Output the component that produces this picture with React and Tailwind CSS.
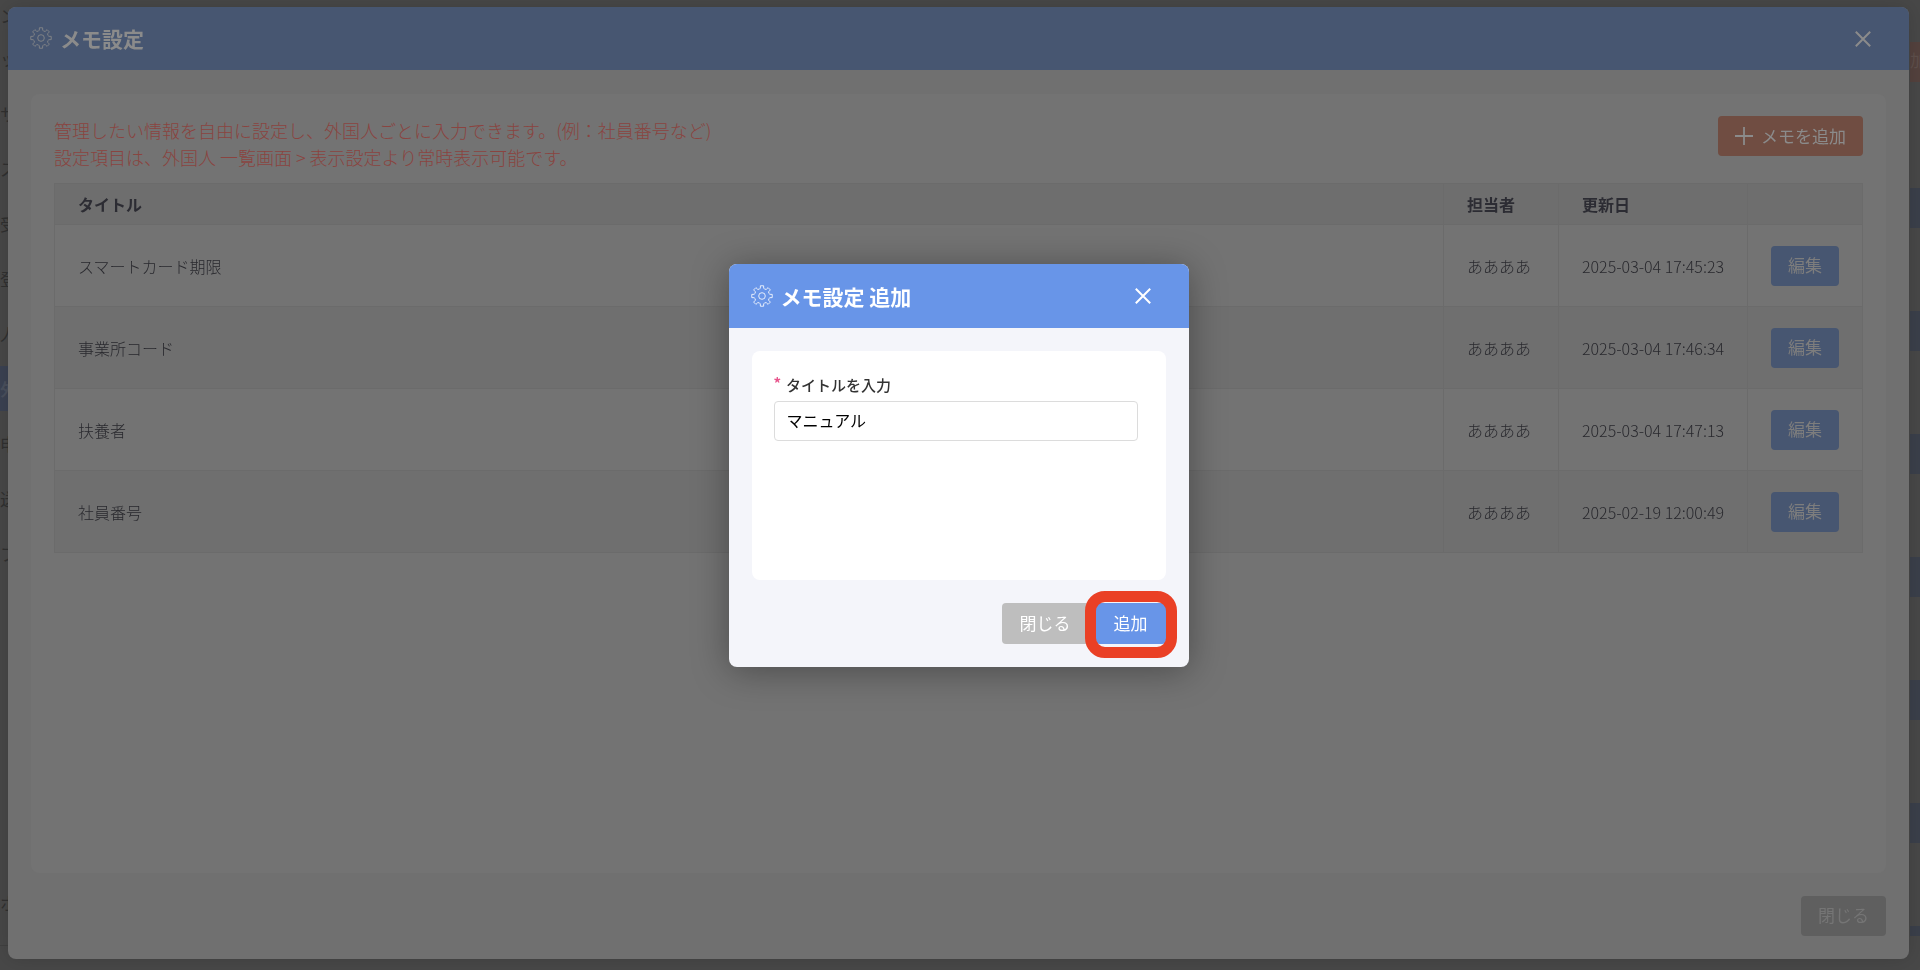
import React, { useState } from "react";

const memos = [
    { id: 1, title: "スマートカード期限", staff: "ああああ", updatedAt: "2025-03-04 17:45:23" },
    { id: 2, title: "事業所コード", staff: "ああああ", updatedAt: "2025-03-04 17:46:34" },
    { id: 3, title: "扶養者", staff: "ああああ", updatedAt: "2025-03-04 17:47:13" },
    { id: 4, title: "社員番号", staff: "ああああ", updatedAt: "2025-02-19 12:00:49" },
];

const menuItems = ["ッ", "サ", "ス", "受", "登", "人", "外", "申", "送", "フ"];


// gear outline with eight teeth
const gearPath = () => {
    const at = (r, deg) => {
        const a = ((deg - 90) * Math.PI) / 180;
        return `${(12 + r * Math.cos(a)).toFixed(2)} ${(12 + r * Math.sin(a)).toFixed(2)}`;
    };
    let d = "";
    for (let i = 0; i < 8; i++) {
        const c = i * 45;
        d += `${i === 0 ? "M" : "L"}${at(8.8, c - 12)} L${at(11.3, c - 9)} L${at(11.3, c + 9)} L${at(8.8, c + 12)} Q${at(7.2, c + 22.5)} ${at(8.8, c + 33)} `;
    }
    return d + "Z";
};

const GearIcon = () => (
    <svg viewBox="0 0 24 24" className="size-[22px]" fill="none" stroke="currentColor" strokeWidth="0.9" strokeLinejoin="round">
        <path d={gearPath()} />
        <circle cx="12" cy="12" r="3.6" />
    </svg>
);

const CloseIcon = () => (
    <svg viewBox="0 0 16 16" className="size-4" fill="none" stroke="currentColor" strokeWidth="2">
        <path d="M0.8 0.8 15.2 15.2M15.2 0.8 0.8 15.2" />
    </svg>
);

const PlusIcon = () => (
    <svg viewBox="0 0 18 18" className="size-[18px]" fill="none" stroke="currentColor" strokeWidth="1.8">
        <path d="M9 0V18M0 9H18" />
    </svg>
);


const Background = () => (
    <div className="h-screen flex justify-between overflow-hidden bg-[#484848] text-[#303030] text-[17px]">
        <nav className="w-60 flex flex-col">
            <span className="h-[31px] flex items-center">ン</span>
            {menuItems.map(item => (
                <a
                    href="#"
                    key={item}
                    className={item === "外" ? "h-[55px] flex items-center bg-[#3b4252] text-[#4a505d] font-bold bg-clip-content py-[5px]" : "h-[55px] flex items-center"}
                >
                    {item}
                </a>
            ))}
            <span className="mt-auto mb-6 h-[86px] flex items-center border-b border-[#404040]">ホ</span>
        </nav>
        <div className="w-[10px] flex flex-col pt-[42px]">
            <div className="h-10 mb-[106px] bg-[#54423e] text-[#5f504c] leading-9 overflow-hidden">加</div>
            <div className="flex flex-col gap-[83px]">
                {[1, 2, 3, 4, 5, 6].map(n => (
                    <div key={n} className="h-10 bg-[#3b404b]" />
                ))}
                <div className="h-[10px] bg-[#3b404b]" />
            </div>
        </div>
    </div>
);


const MemoList = () => (
    <div className="fixed inset-0 flex pt-[7px] pr-[11px] pb-[11px] pl-2">
        <section className="flex-1 flex flex-col rounded-lg bg-[#707070] overflow-hidden shadow-[0_0_20px_rgba(0,0,0,0.15)]">
            <header className="h-[63px] px-[22px] flex items-center justify-between bg-[#475671] text-[#8b8b8b]">
                <h1 className="flex items-center gap-2 pb-px text-[21px] leading-8 font-bold">
                    <GearIcon />
                    メモ設定
                </h1>
                <button type="button" aria-label="閉じる" className="mr-4">
                    <CloseIcon />
                </button>
            </header>

            <div className="flex-1 flex flex-col p-[23px] pt-6">
                <div className="flex-1 rounded-lg bg-[#737373] p-[23px] pt-[22px]">
                    <div className="flex items-start justify-between pb-[13px]">
                        <p className="pt-px -mb-px text-[18px] leading-[27px] font-light text-[#8a4440]">
                            管理したい情報を自由に設定し、外国人ごとに入力できます。(例：社員番号など)<br />
                            設定項目は、外国人 一覧画面 &gt; 表示設定より常時表示可能です。
                        </p>
                        <button type="button" className="h-10 px-[17px] flex items-center gap-2 rounded bg-[#704d42] text-[#8b8b8b] text-[17px]">
                            <PlusIcon />
                            <span className="pb-px">メモを追加</span>
                        </button>
                    </div>

                    <table className="w-full table-fixed border-collapse border border-[#6b6b6b] text-left text-[#29292e]">
                        <thead>
                            <tr className="h-[41px] bg-[#6e6e6e] text-[#2c2c33]">
                                <th className="border border-[#6b6b6b] px-[23px]">タイトル</th>
                                <th className="w-[115px] border border-[#6b6b6b] px-[23px]">担当者</th>
                                <th className="w-[189px] border border-[#6b6b6b] px-[23px]">更新日</th>
                                <th className="w-[115px] border border-[#6b6b6b]"></th>
                            </tr>
                        </thead>
                        <tbody>
                            {memos.map(memo => (
                                <tr key={memo.id} className="h-[82px] even:bg-[#6f6f6f] font-light">
                                    <td className="border border-[#6b6b6b] px-[23px]">{memo.title}</td>
                                    <td className="border border-[#6b6b6b] px-[23px] whitespace-nowrap">{memo.staff}</td>
                                    <td className="border border-[#6b6b6b] px-[23px] whitespace-nowrap">{memo.updatedAt}</td>
                                    <td className="border border-[#6b6b6b] text-center">
                                        <button type="button" className="h-10 px-[17px] pb-0.5 rounded bg-[#475671] text-[#7d7d7d] text-[17px] font-normal">編集</button>
                                    </td>
                                </tr>
                            ))}
                        </tbody>
                    </table>
                </div>
                <div className="flex justify-end pt-[23px]">
                    <button type="button" className="h-10 px-[17px] pb-0.5 rounded bg-[#5f5f5f] text-[#757575] text-[17px]">閉じる</button>
                </div>
            </div>
        </section>
    </div>
);


const AddMemo = () => {
    const [title, setTitle] = useState("マニュアル");

    return (
        <div className="fixed inset-0 flex items-start justify-center pt-[264px] pr-[3px]">
            <form className="w-[460px] rounded-lg bg-[#f4f5fa] shadow-[0_4px_36px_rgba(0,0,0,0.35)]">
                <header className="h-16 px-[22px] flex items-center justify-between rounded-t-lg bg-[#6895e8] text-white">
                    <h2 className="flex items-center gap-2 pb-px text-[21px] leading-8 font-bold">
                        <GearIcon />
                        メモ設定 追加
                    </h2>
                    <button type="button" aria-label="閉じる" className="mr-4">
                        <CloseIcon />
                    </button>
                </header>

                <div className="p-[23px]">
                    <div className="h-[229px] rounded-lg bg-white pt-[22px] pr-7 pl-[22px]">
                        <label htmlFor="title" className="flex gap-[5px] text-[15px] leading-6 font-medium text-[#333]">
                            <span className="text-[#e8558c] leading-5 font-bold">*</span>
                            タイトルを入力
                        </label>
                        <input
                            id="title"
                            type="text"
                            value={title}
                            onChange={e => setTitle(e.target.value)}
                            className="w-full h-10 mt-1 px-3 pb-0.5 border border-[#dcdcdc] rounded text-base text-black"
                        />
                    </div>
                    <div className="flex justify-end gap-[7px] pt-[23px] text-[17px] text-white">
                        <button type="button" className="h-[41px] px-[18px] pb-0.5 rounded bg-[#bebebe]">閉じる</button>
                        <div className="relative">
                            <button type="button" className="h-[41px] px-[18px] pb-0.5 rounded bg-[#6895e8]">追加</button>
                            <div className="absolute -top-3 -right-[11px] -bottom-[14px] -left-[11px] border-[11px] border-[#ea4025] rounded-[20px] pointer-events-none" />
                        </div>
                    </div>
                </div>
            </form>
        </div>
    );
};


const App = () => {
    return (
        <main lang="ja" className="font-['Noto_Sans_CJK_JP',sans-serif] text-base">
            <Background />
            <MemoList />
            <AddMemo />
        </main>
    );
};

export default App;
